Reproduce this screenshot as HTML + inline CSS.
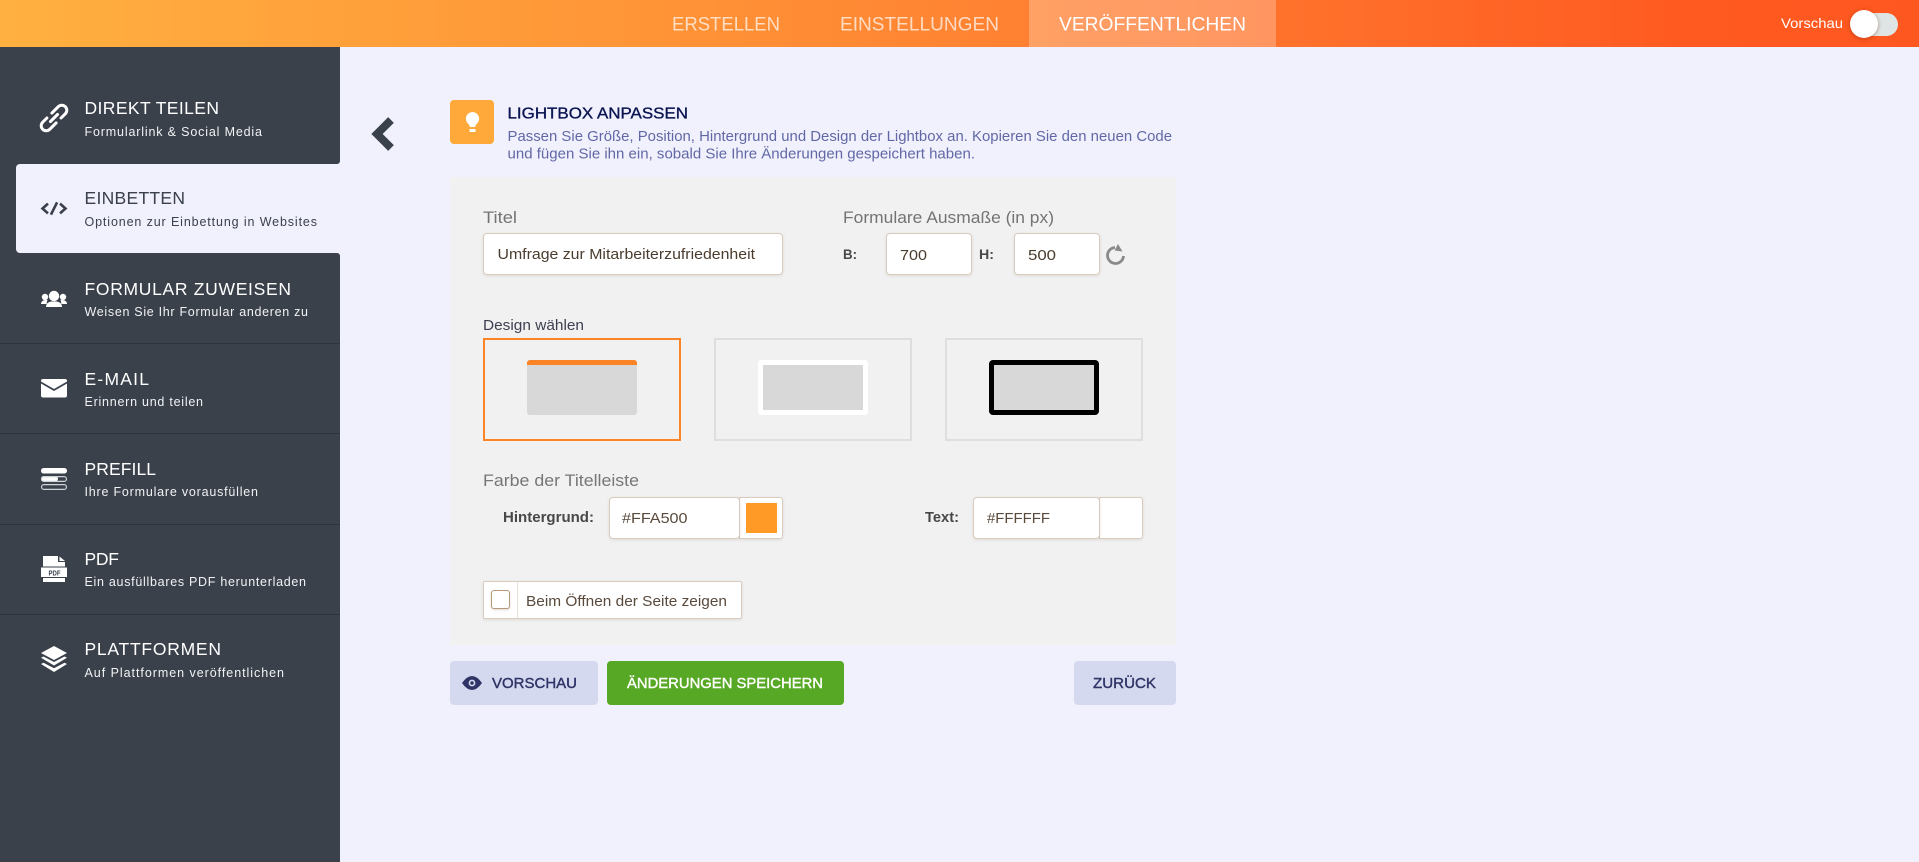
<!DOCTYPE html>
<html lang="de">
<head>
<meta charset="utf-8">
<title>Lightbox anpassen</title>
<style>
html,body{margin:0;padding:0;width:1919px;height:862px;overflow:hidden;background:#f1f1fd;}
body{position:relative;font-family:"Liberation Sans",sans-serif;}
.b{position:absolute;box-sizing:border-box;}
.inp{background:#fff;border:1px solid #d9ccbe;border-radius:4px;box-shadow:0 1px 3px rgba(90,70,50,.12);}
svg{position:absolute;left:0;top:0;}
text{font-family:"Liberation Sans",sans-serif;}
</style>
</head>
<body>
<div class="b" style="left:0;top:0;width:1919px;height:47px;background:linear-gradient(90deg,#ffb040 0%,#ff9537 33%,#ff7a30 60%,#ff5a20 88%,#ff5720 100%);"></div>
<div class="b" style="left:1029px;top:0;width:247px;height:47px;background:rgba(255,255,255,.25);"></div>
<div class="b" style="left:1851px;top:13px;width:47px;height:23px;border-radius:12px;background:#dfe5e5;"></div>
<div class="b" style="left:1850px;top:10px;width:28px;height:28px;border-radius:50%;background:#fff;box-shadow:0 1px 4px rgba(120,40,0,.45);"></div>

<div class="b" style="left:0;top:47px;width:340px;height:117px;background:#3a414b;border-radius:0 0 3px 0;"></div>
<div class="b" style="left:0;top:160px;width:24px;height:97px;background:#3a414b;"></div>
<div class="b" style="left:0;top:253px;width:340px;height:609px;background:#3a414b;border-radius:0 3px 0 0;"></div>
<div class="b" style="left:0;top:343px;width:340px;height:1px;background:#2e343c;"></div>
<div class="b" style="left:0;top:433px;width:340px;height:1px;background:#2e343c;"></div>
<div class="b" style="left:0;top:524px;width:340px;height:1px;background:#2e343c;"></div>
<div class="b" style="left:0;top:614px;width:340px;height:1px;background:#2e343c;"></div>
<div class="b" style="left:16px;top:164px;width:324px;height:89px;background:#f1f1fd;border-radius:4px 0 0 4px;"></div>

<div class="b" style="left:450px;top:100px;width:44px;height:44px;background:#ffa93a;border-radius:4px;"></div>
<div class="b" style="left:450px;top:177px;width:726px;height:468px;background:#f1f1f1;"></div>

<div class="b inp" style="left:483px;top:233px;width:300px;height:42px;"></div>
<div class="b inp" style="left:886px;top:233px;width:86px;height:42px;"></div>
<div class="b inp" style="left:1014px;top:233px;width:86px;height:42px;"></div>

<div class="b" style="left:483px;top:338px;width:198px;height:103px;border:2px solid #fb8526;"></div>
<div class="b" style="left:527px;top:360px;width:110px;height:55px;background:#d8d8d8;border-radius:3px;overflow:hidden;"><div style="height:5px;background:#fb8526;"></div></div>
<div class="b" style="left:714px;top:338px;width:198px;height:103px;border:2px solid #dedede;"></div>
<div class="b" style="left:758px;top:360px;width:110px;height:55px;background:#d8d8d8;border:5px solid #fff;border-radius:3px;"></div>
<div class="b" style="left:945px;top:338px;width:198px;height:103px;border:2px solid #dedede;"></div>
<div class="b" style="left:989px;top:360px;width:110px;height:55px;background:#d8d8d8;border:5px solid #000;border-radius:4px;"></div>

<div class="b inp" style="left:739px;top:497px;width:44px;height:42px;border-radius:0 3px 3px 0;"></div>
<div class="b" style="left:746px;top:503px;width:31px;height:30px;background:#ff9a26;"></div>
<div class="b inp" style="left:609px;top:497px;width:131px;height:42px;"></div>
<div class="b inp" style="left:1099px;top:497px;width:44px;height:42px;border-radius:0 3px 3px 0;"></div>
<div class="b inp" style="left:973px;top:497px;width:127px;height:42px;"></div>

<div class="b inp" style="left:483px;top:581px;width:259px;height:38px;border-radius:2px;"></div>
<div class="b" style="left:517px;top:582px;width:1px;height:36px;background:#e6e0d9;"></div>
<div class="b" style="left:491px;top:590px;width:19px;height:19px;background:#fff;border:1px solid #b89a78;border-radius:3px;box-shadow:0 1px 2px rgba(90,70,50,.2);"></div>

<div class="b" style="left:450px;top:661px;width:148px;height:44px;background:#d5d9ef;border-radius:4px;"></div>
<div class="b" style="left:607px;top:661px;width:237px;height:44px;background:#57a824;border-radius:4px;"></div>
<div class="b" style="left:1074px;top:661px;width:102px;height:44px;background:#d5d9ef;border-radius:4px;"></div>

<svg width="1919" height="862" viewBox="0 0 1919 862" xmlns="http://www.w3.org/2000/svg">
<!-- icons -->
<g fill="none" stroke="#fff" stroke-width="3" stroke-linecap="round" stroke-linejoin="round" transform="translate(54 118) rotate(-45)">
  <path d="M2,-5 H11 A5 5 0 0 1 11,5 H5"/>
  <path d="M-2,5 H-11 A5 5 0 0 1 -11,-5 H-5"/>
  <path d="M-5,0 H5"/>
</g>
<g fill="none" stroke="#3a414b" stroke-width="2.6" stroke-linecap="square" stroke-linejoin="miter">
  <path d="M47 204.500 L42.500 208.500 L47 212.500"/>
  <path d="M61 204.500 L65.500 208.500 L61 212.500"/>
  <path d="M56.500 203.500 L51.500 213.500"/>
</g>
<g fill="#fff">
  <circle cx="54" cy="296" r="5.200"/>
  <circle cx="45" cy="297" r="3.200"/>
  <circle cx="63" cy="297" r="3.200"/>
  <path d="M41 303 q1 -3 5 -3 l1.500 0 q-0.800 1.500 -0.800 4 L41 304z"/>
  <path d="M67 303 q-1 -3 -5 -3 l-1.500 0 q0.800 1.500 0.800 4 L67 304z"/>
  <path d="M46 307 q0 -4.500 5 -5.500 l6 0 q5 1 5 5.500z"/>
  <path d="M43 379 h22 q2 0 2 2 l0 .5 l-13 7.500 l-13 -7.500 l0 -.5 q0 -2 2 -2z"/>
  <path d="M41 383.500 l13 7.500 l13 -7.500 v12 q0 2 -2 2 h-22 q-2 0 -2 -2z"/>
  <rect x="41" y="468" width="26" height="5.500" rx="2.700"/>
  <rect x="41" y="476" width="17" height="5.500" rx="2.700"/>
</g>
<g fill="none" stroke="#cfd2d6" stroke-width="1.200">
  <rect x="41.600" y="476.600" width="24.800" height="4.800" rx="2.200"/>
  <rect x="41.600" y="484.600" width="24.800" height="4.800" rx="2.200"/>
</g>
<g fill="#fff">
  <path d="M43 556 H58 V562 H65 V566.500 H43z"/>
  <path d="M59.500 556.500 L65 561 H59.500z"/>
  <rect x="41" y="567.500" width="26" height="9.500"/>
  <rect x="43" y="578" width="22" height="4"/>
  <path d="M54 646 L67 653 L54 660 L41 653z"/>
  <path d="M41 657.800 L43.500 656.500 L54 662 L64.500 656.500 L67 657.800 L54 665.500z"/>
  <path d="M41 664 L43.500 662.700 L54 668.200 L64.500 662.700 L67 664 L54 672z"/>
</g>
<path d="M391 120 L377 134 L391 148" fill="none" stroke="#3a414b" stroke-width="8" stroke-linejoin="miter"/>
<!-- bulb -->
<path d="M472.500 112 a6.700 6.700 0 0 1 4.200 11.900 q-1.400 1.200 -1.400 3.100 h-5.600 q0 -1.900 -1.400 -3.100 A6.700 6.700 0 0 1 472.500 112z" fill="#fff"/>
<rect x="469.500" y="129" width="6" height="3" fill="#fff"/>
<!-- refresh -->
<path d="M1123.500 256 A8 8 0 1 1 1115 247.500" fill="none" stroke="#8a8a8a" stroke-width="2.800"/>
<path d="M1118 244 L1122.500 251.500 L1114.500 250.500z" fill="#8a8a8a"/>
<!-- eye -->
<path d="M462 683 q10 -14 20 0 q-10 14 -20 0z" fill="#2e3566"/>
<circle cx="472" cy="683" r="3.400" fill="#d5d9ef"/>
<circle cx="472" cy="683" r="1.800" fill="#2e3566"/>

<!-- header text -->
<g font-size="19" fill="#fff">
  <text x="672" y="30.500" textLength="108" lengthAdjust="spacingAndGlyphs" fill-opacity=".7">ERSTELLEN</text>
  <text x="840" y="30.500" textLength="159" lengthAdjust="spacingAndGlyphs" fill-opacity=".7">EINSTELLUNGEN</text>
  <text x="1059" y="30.500" textLength="187" lengthAdjust="spacingAndGlyphs">VERÖFFENTLICHEN</text>
</g>
<text x="1781" y="28" font-size="14" fill="#fff" textLength="62" lengthAdjust="spacingAndGlyphs">Vorschau</text>

<!-- sidebar text -->
<g font-size="17.500" fill="#fff">
  <text x="84.500" y="114" textLength="134.500" lengthAdjust="spacing">DIREKT TEILEN</text>
  <text x="84.500" y="204" textLength="100.500" lengthAdjust="spacing" fill="#3a414b">EINBETTEN</text>
  <text x="84.500" y="295" textLength="206.500" lengthAdjust="spacing">FORMULAR ZUWEISEN</text>
  <text x="84.500" y="385" textLength="64.500" lengthAdjust="spacing">E-MAIL</text>
  <text x="84.500" y="475" textLength="71.500" lengthAdjust="spacing">PREFILL</text>
  <text x="84.500" y="565" textLength="34.500" lengthAdjust="spacing">PDF</text>
  <text x="84.500" y="655" textLength="136.500" lengthAdjust="spacing">PLATTFORMEN</text>
</g>
<g font-size="12.500" fill="#f1f2f4">
  <text x="84.500" y="136" textLength="177.500" lengthAdjust="spacing">Formularlink &amp; Social Media</text>
  <text x="84.500" y="226" textLength="232.500" lengthAdjust="spacing" fill="#3a414b">Optionen zur Einbettung in Websites</text>
  <text x="84.500" y="316" textLength="223.500" lengthAdjust="spacing">Weisen Sie Ihr Formular anderen zu</text>
  <text x="84.500" y="406" textLength="118.500" lengthAdjust="spacing">Erinnern und teilen</text>
  <text x="84.500" y="496" textLength="173.500" lengthAdjust="spacing">Ihre Formulare vorausfüllen</text>
  <text x="84.500" y="586" textLength="221.500" lengthAdjust="spacing">Ein ausfüllbares PDF herunterladen</text>
  <text x="84.500" y="677" textLength="199.500" lengthAdjust="spacing">Auf Plattformen veröffentlichen</text>
</g>
<text x="48.500" y="575.300" font-size="7" font-weight="bold" fill="#3a414b" textLength="12" lengthAdjust="spacingAndGlyphs">PDF</text>

<!-- main text -->
<text x="507.500" y="118.500" font-size="16" fill="#0a1551" stroke="#0a1551" stroke-width=".35" textLength="180.500" lengthAdjust="spacingAndGlyphs">LIGHTBOX ANPASSEN</text>
<text x="507.500" y="141" font-size="15" fill="#6168a5" textLength="664.500" lengthAdjust="spacingAndGlyphs">Passen Sie Größe, Position, Hintergrund und Design der Lightbox an. Kopieren Sie den neuen Code</text>
<text x="507.500" y="158.500" font-size="15" fill="#6168a5" textLength="467.500" lengthAdjust="spacingAndGlyphs">und fügen Sie ihn ein, sobald Sie Ihre Änderungen gespeichert haben.</text>

<text x="483" y="223" font-size="17" fill="#747474" textLength="34" lengthAdjust="spacingAndGlyphs">Titel</text>
<text x="843" y="223" font-size="17" fill="#747474" textLength="211" lengthAdjust="spacingAndGlyphs">Formulare Ausmaße (in px)</text>
<text x="497.500" y="259" font-size="15" fill="#4a3c2e" textLength="257.500" lengthAdjust="spacingAndGlyphs">Umfrage zur Mitarbeiterzufriedenheit</text>
<text x="843" y="259" font-size="14" font-weight="bold" fill="#484848" textLength="14" lengthAdjust="spacingAndGlyphs">B:</text>
<text x="900" y="260" font-size="15" fill="#4a3c2e" textLength="27" lengthAdjust="spacingAndGlyphs">700</text>
<text x="979" y="259" font-size="14" font-weight="bold" fill="#484848" textLength="15" lengthAdjust="spacingAndGlyphs">H:</text>
<text x="1028" y="260" font-size="15" fill="#4a3c2e" textLength="28" lengthAdjust="spacingAndGlyphs">500</text>

<text x="483" y="330" font-size="15" fill="#3c4050" textLength="101" lengthAdjust="spacingAndGlyphs">Design wählen</text>
<text x="483" y="486" font-size="17" fill="#777" textLength="156" lengthAdjust="spacingAndGlyphs">Farbe der Titelleiste</text>
<text x="503" y="522" font-size="14.500" font-weight="bold" fill="#484848" textLength="91" lengthAdjust="spacingAndGlyphs">Hintergrund:</text>
<text x="622" y="523" font-size="15" fill="#5a4a3c" textLength="65.500" lengthAdjust="spacingAndGlyphs">#FFA500</text>
<text x="925" y="522" font-size="14.500" font-weight="bold" fill="#484848" textLength="34" lengthAdjust="spacingAndGlyphs">Text:</text>
<text x="987" y="523" font-size="15" fill="#5a4a3c" textLength="63" lengthAdjust="spacingAndGlyphs">#FFFFFF</text>
<text x="526" y="606" font-size="15" fill="#5a4a3c" textLength="201" lengthAdjust="spacingAndGlyphs">Beim Öffnen der Seite zeigen</text>

<text x="492" y="688" font-size="15" fill="#2e3566" stroke="#2e3566" stroke-width=".4" textLength="85" lengthAdjust="spacingAndGlyphs">VORSCHAU</text>
<text x="627" y="688" font-size="15" fill="#fff" stroke="#fff" stroke-width=".4" textLength="196" lengthAdjust="spacingAndGlyphs">ÄNDERUNGEN SPEICHERN</text>
<text x="1093" y="688" font-size="15" fill="#2e3566" stroke="#2e3566" stroke-width=".4" textLength="63" lengthAdjust="spacingAndGlyphs">ZURÜCK</text>
</svg>
</body>
</html>
